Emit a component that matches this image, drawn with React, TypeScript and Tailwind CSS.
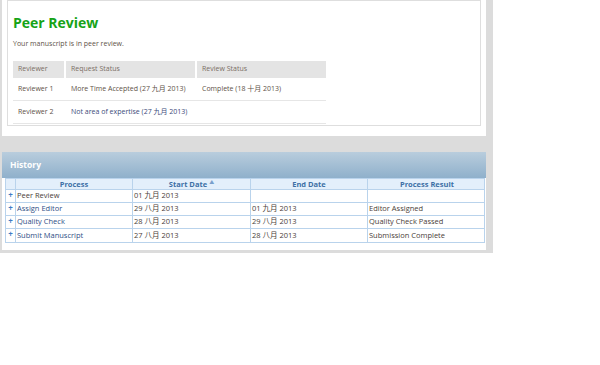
import React from 'react'

const font = { fontFamily: '"Open Sans", "Noto Sans CJK SC", sans-serif' }

const reviewers = [
  { name: 'Reviewer 1', request: 'More Time Accepted (27 九月 2013)', review: 'Complete (18 十月 2013)', link: false },
  { name: 'Reviewer 2', request: 'Not area of expertise (27 九月 2013)', review: '', link: true },
]

const history = [
  { process: 'Peer Review', start: '01 九月 2013', end: '', result: '', link: false },
  { process: 'Assign Editor', start: '29 八月 2013', end: '01 九月 2013', result: 'Editor Assigned', link: true },
  { process: 'Quality Check', start: '28 八月 2013', end: '29 八月 2013', result: 'Quality Check Passed', link: true },
  { process: 'Submit Manuscript', start: '27 八月 2013', end: '28 八月 2013', result: 'Submission Complete', link: true },
]

const cols = 'grid grid-cols-[10px_117px_118px_117px_118px]'

export default function App() {
  return (
    <div className="w-[600px] h-[365px] bg-white" style={font}>
      <div className="w-[493px] bg-[#dcdcdc] pl-[2px] pr-[7px] pb-[3px]">
        {/* Peer review panel */}
        <div className="bg-white px-[5px] pb-[10px]">
          <div className="border border-[#dedede] h-[126px] px-[5px]">
            <h1 className="text-[14px] leading-[14px] font-bold text-[#17a317] pt-[15px]">Peer Review</h1>
            <p className="text-[7px] leading-[10px] text-[#5e5247] mt-[9px]">Your manuscript is in peer review.</p>
            <div className="w-[313px] mt-[12px] text-[7px] text-[#5e5247] whitespace-nowrap">
              <div className="grid grid-cols-[51px_129px_129px] gap-x-[2px] h-[17px]">
                <div className="bg-[#e4e4e4] text-[#7a6e64] flex items-center pl-[5px]">Reviewer</div>
                <div className="bg-[#e4e4e4] text-[#7a6e64] flex items-center pl-[5px]">Request Status</div>
                <div className="bg-[#e4e4e4] text-[#7a6e64] flex items-center pl-[5px]">Review Status</div>
              </div>
              {reviewers.map((r) => (
                <div key={r.name} className="grid grid-cols-[51px_129px_129px] gap-x-[2px] h-[23px] border-b border-[#e6e6e6]">
                  <div className="flex items-center pl-[5px]">{r.name}</div>
                  <div className={`flex items-center pl-[5px] ${r.link ? 'text-[#3c4b7a]' : ''}`}>{r.request}</div>
                  <div className="flex items-center pl-[5px]">{r.review}</div>
                </div>
              ))}
            </div>
          </div>
        </div>

        <div className="h-[16px]" />

        {/* History panel */}
        <div className="bg-white pl-[3px] pr-[1px] pb-[7px]">
          <div className="-ml-[3px] -mr-[1px] h-[26px] bg-gradient-to-b from-[#b9cddd] to-[#8fb0cb] flex items-center pl-[8px]">
            <span className="text-white font-bold text-[8.5px]">History</span>
          </div>
          <div className="border border-[#b9d3ec] text-[7.5px] whitespace-nowrap">
            <div className={`${cols} h-[11px] bg-[#e3effb] text-[#3d6fa6] font-bold border-b border-[#b9d3ec]`}>
              <div className="border-r border-[#b9d3ec]" />
              <div className="border-r border-[#b9d3ec] flex items-center justify-center">Process</div>
              <div className="border-r border-[#b9d3ec] flex items-center justify-center">
                Start Date
                <span className="text-[#7aa0cc] text-[5px] ml-[2px] -mt-[3px]">▲</span>
              </div>
              <div className="border-r border-[#b9d3ec] flex items-center justify-center">End Date</div>
              <div className="flex items-center justify-center">Process Result</div>
            </div>
            {history.map((h, i) => (
              <div
                key={h.process}
                className={`${cols} h-[13px] text-[#4a4038] ${i < history.length - 1 ? 'border-b border-[#b9d3ec]' : ''}`}
              >
                <div className="border-r border-[#b9d3ec] flex items-start justify-center text-[#3d7bc4] font-bold text-[8px] leading-none pt-[1px]">+</div>
                <div className={`border-r border-[#b9d3ec] flex items-center pl-[1px] ${h.link ? 'text-[#2f4f86]' : ''}`}>{h.process}</div>
                <div className="border-r border-[#b9d3ec] flex items-center pl-[1px]">{h.start}</div>
                <div className="border-r border-[#b9d3ec] flex items-center pl-[1px]">{h.end}</div>
                <div className="flex items-center pl-[1px]">{h.result}</div>
              </div>
            ))}
          </div>
        </div>
      </div>
    </div>
  )
}
